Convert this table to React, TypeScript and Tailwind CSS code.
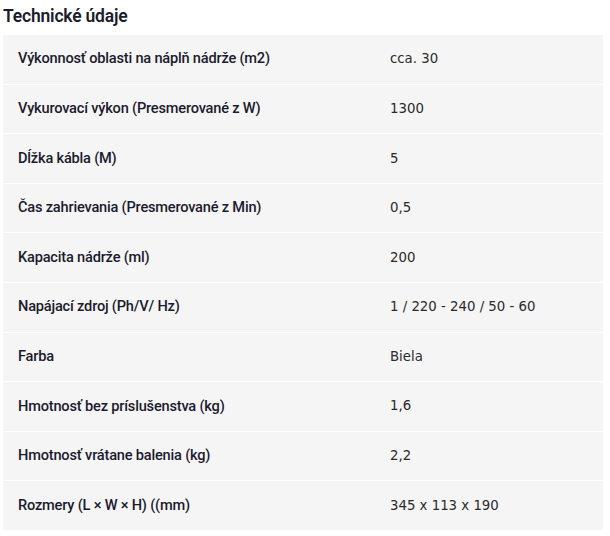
const rows: [string, string][] = [
  ['Výkonnosť oblasti na náplň nádrže (m2)', 'cca. 30'],
  ['Vykurovací výkon (Presmerované z W)', '1300'],
  ['Dĺžka kábla (M)', '5'],
  ['Čas zahrievania (Presmerované z Min)', '0,5'],
  ['Kapacita nádrže (ml)', '200'],
  ['Napájací zdroj (Ph/V/ Hz)', '1 / 220 - 240 / 50 - 60'],
  ['Farba', 'Biela'],
  ['Hmotnosť bez príslušenstva (kg)', '1,6'],
  ['Hmotnosť vrátane balenia (kg)', '2,2'],
  ['Rozmery (L × W × H) ((mm)', '345 x 113 x 190'],
];

export default function App() {
  return (
    <div className="w-[610px] h-[536px] bg-white px-[3px] pt-[5px]">
      <h2 className="text-[17.5px] leading-[22px] font-semibold text-[#1c1c2a] font-['Roboto',sans-serif] tracking-[-0.2px]">
        Technické údaje
      </h2>
      <div className="mt-[8px] w-[600px] flex flex-col gap-px">
        {rows.map(([label, value]) => (
          <div key={label} className="h-[48.6px] bg-[#f5f5f5] flex items-center">
            <div className="w-[387px] pl-[15px] text-[14.6px] font-medium text-[#1b1b2d] font-['Roboto',sans-serif] tracking-[-0.2px]">
              {label}
            </div>
            <div className="text-[13.3px] text-[#2a2a2a] font-['DejaVu_Sans',sans-serif]">
              {value}
            </div>
          </div>
        ))}
      </div>
    </div>
  );
}
